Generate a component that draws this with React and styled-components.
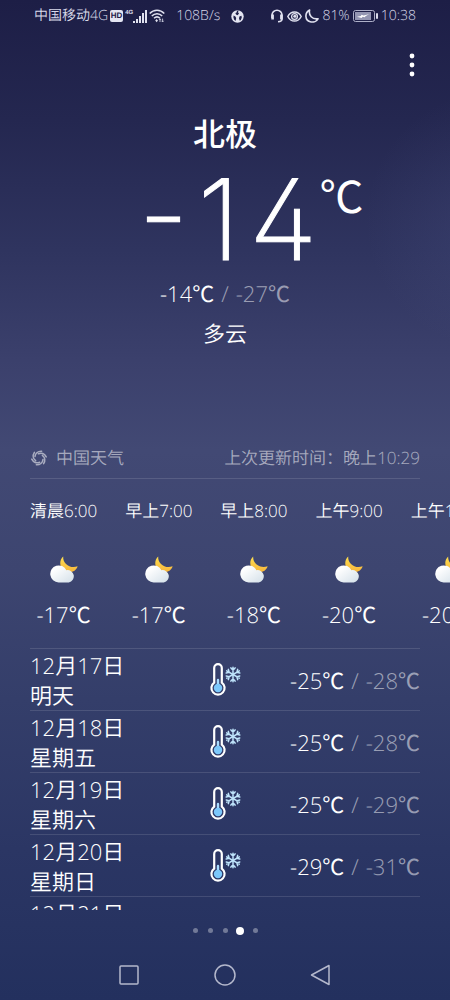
import React, { useState } from 'react';
import styled, { createGlobalStyle } from 'styled-components';

const GlobalStyle = createGlobalStyle`
  *,
  *::before,
  *::after {
    box-sizing: border-box;
  }

  body {
    margin: 0;
    background: #232f5f;
    text-rendering: geometricPrecision;
  }

  button {
    padding: 0;
    border: 0;
    background: none;
    color: inherit;
    font: inherit;
    cursor: pointer;
  }

  ul {
    margin: 0;
    padding: 0;
    list-style: none;
  }

  svg {
    display: block;
    flex: none;
  }
`;

const Screen = styled.div`
  display: flex;
  flex-direction: column;
  min-height: 100vh;
  overflow: hidden;
  color: #fff;
  font-family: 'Open Sans', 'Noto Sans CJK SC', sans-serif;
  font-size: 22px;
  font-weight: 300;
  line-height: 30px;
  background: radial-gradient(
      circle at 110% 22%,
      rgba(110, 120, 180, 0.14),
      transparent 130px
    ),
    linear-gradient(
      #1d1e46 0%,
      #242750 12%,
      #2f345f 25%,
      #3b406c 36%,
      #424974 45%,
      #3d4570 57%,
      #343e6a 70%,
      #2b3664 85%,
      #23305e 100%
    );
`;

const StatusBar = styled.header`
  display: flex;
  justify-content: space-between;
  height: 32px;
  padding: 0 34px;
  color: #d9daea;
  font-size: 14px;
  line-height: 32px;
`;

const StatusGroup = styled.div`
  display: flex;
  align-items: center;
  gap: ${(props) => props.$gap}px;
`;

const HdBadge = styled.span`
  width: 13px;
  height: 12px;
  border-radius: 2px;
  background: #e4e5f2;
  color: #1f2049;
  font-family: 'Liberation Sans', sans-serif;
  font-size: 8px;
  font-weight: 700;
  line-height: 12px;
  text-align: center;
`;

const Signal = styled.span`
  display: flex;
  align-items: flex-start;
`;

const SignalType = styled.span`
  font-family: 'Liberation Sans', sans-serif;
  font-size: 6px;
  font-weight: 700;
  line-height: 6px;
`;

const Toolbar = styled.div`
  display: flex;
  justify-content: flex-end;
  height: 66px;
  padding: 0 26px;
`;

const MenuButton = styled.button`
  display: flex;
  align-items: center;
  justify-content: center;
  width: 24px;
  height: 66px;
`;

const Current = styled.section`
  display: flex;
  flex-direction: column;
  align-items: center;
  height: 340px;
  padding-top: 13px;
`;

const City = styled.h1`
  margin: 0;
  font-size: 32px;
  font-weight: 500;
  line-height: 48px;
`;

const Temperature = styled.div`
  display: grid;
  grid-template-columns: 1fr auto 1fr;
  align-self: stretch;
  height: 120px;
  padding-left: 6px;
`;

const Degrees = styled.span`
  display: flex;
  grid-column: 2;
  gap: 9px;
  font-family: Inter, sans-serif;
  font-size: 112px;
  font-feature-settings: 'case', 'cv02', 'ss01';
  font-weight: 200;
  line-height: 122px;
  -webkit-text-stroke: 1px #fff;
`;

const Unit = styled.span`
  padding: 13px 0 0 2px;
  font-size: 44px;
  font-weight: 400;
  line-height: 48px;
`;

const Range = styled.div`
  display: flex;
  gap: 7px;
  white-space: nowrap;
`;

const Low = styled.span`
  color: rgba(255, 255, 255, 0.52);
`;

const Condition = styled.div`
  margin-top: 10px;
`;

const Han = styled.span`
  font-weight: ${(props) => (props.$unit ? 400 : 350)};
`;

const Source = styled.div`
  display: flex;
  align-items: center;
  justify-content: space-between;
  height: 41px;
  margin: 0 30px;
  border-bottom: 1px solid rgba(255, 255, 255, 0.12);
  color: rgba(255, 255, 255, 0.55);
  font-size: 17px;
`;

const SourceName = styled.a`
  display: flex;
  align-items: center;
  gap: 8px;
  color: inherit;
  text-decoration: none;
`;

const Hours = styled.ul`
  display: flex;
  gap: 28px;
  height: 169px;
  padding: 17px 0 0 30px;
  overflow: hidden;
`;

const Hour = styled.li`
  display: flex;
  flex: none;
  flex-direction: column;
  align-items: center;
`;

const HourLabel = styled.span`
  font-size: 17px;
`;

const HourIcon = styled.span`
  margin: 30px 0 17px;
`;

const Days = styled.ul`
  flex: 1 1 0;
  min-height: 0;
  margin: 0 30px;
  overflow: hidden;
`;

const Day = styled.li`
  display: grid;
  grid-template-columns: 1fr auto 1fr;
  align-items: center;
  height: 62px;
  padding-top: 2px;
  border-top: 1px solid rgba(255, 255, 255, 0.12);
`;

const DayRange = styled(Range)`
  justify-content: flex-end;
`;

const Pager = styled.div`
  display: flex;
  align-items: center;
  justify-content: center;
  height: 41px;
`;

const PageDot = styled.button`
  display: flex;
  align-items: center;
  justify-content: center;
  width: 15px;
  height: 24px;

  &::before {
    content: '';
    width: ${(props) => (props.$active ? 8 : 5)}px;
    height: ${(props) => (props.$active ? 8 : 5)}px;
    border-radius: 50%;
    background: ${(props) =>
      props.$active ? '#fff' : 'rgba(255, 255, 255, 0.35)'};
  }
`;

const NavBar = styled.nav`
  display: flex;
  justify-content: center;
  gap: 48px;
  height: 49px;
`;

const NavButton = styled.button`
  display: flex;
  align-items: center;
  justify-content: center;
  width: 48px;
  height: 48px;
`;

const hours = [
  { label: '清晨6:00', temp: '-17℃' },
  { label: '早上7:00', temp: '-17℃' },
  { label: '早上8:00', temp: '-18℃' },
  { label: '上午9:00', temp: '-20℃' },
  { label: '上午10:00', temp: '-20℃' },
];

const days = [
  { date: '12月17日', name: '明天', high: '-25℃', low: '-28℃' },
  { date: '12月18日', name: '星期五', high: '-25℃', low: '-28℃' },
  { date: '12月19日', name: '星期六', high: '-25℃', low: '-29℃' },
  { date: '12月20日', name: '星期日', high: '-29℃', low: '-31℃' },
  { date: '12月21日', name: '星期一', high: '-28℃', low: '-30℃' },
];

// digits stay light, Chinese characters and the unit get a heavier cut
const Mixed = ({ children }) => (
  <span>
    {children.split(/([^\x20-\x7e]+)/).map((part, i) =>
      i % 2 ? (
        <Han key={i} $unit={part === '℃'}>
          {part}
        </Han>
      ) : (
        part
      )
    )}
  </span>
);

const SignalIcon = () => (
  <svg width="14" height="13" viewBox="0 0 14 13" fill="#e0e1ef">
    <rect x="0" y="11" width="2" height="2" />
    <rect x="3" y="9" width="2" height="4" />
    <rect x="6" y="6" width="2" height="7" />
    <rect x="9" y="3" width="2" height="10" />
    <rect x="12" y="0" width="2" height="13" />
  </svg>
);

const WifiIcon = () => (
  <svg width="16" height="14" viewBox="0 0 16 14" fill="none" stroke="#e0e1ef">
    <path d="M0.7 4.6C4.7 0.2 11.3 0.2 15.3 4.6" strokeWidth="1.5" />
    <path d="M2.8 7C5.7 3.9 10.3 3.9 13.2 7" strokeWidth="1.5" />
    <path d="M5 9.3C6.8 7.6 9.2 7.6 11 9.3" strokeWidth="1.5" />
    <path d="M6.2 11.6 7.6 9.9 9 11.6 7.6 13.2Z" fill="#e0e1ef" stroke="none" />
    <path d="M11 13V10M10 11l1-1.3L12 11M13.6 9.6v3M12.6 11.8l1 1.2 1-1.2" strokeWidth="0.8" />
  </svg>
);

const GlobeIcon = () => (
  <svg width="13" height="13" viewBox="0 0 13 13">
    <circle cx="6.5" cy="6.5" r="6.2" fill="#e4e5f2" />
    <path
      d="M6 .8 7.6.6 7 2.2 8 3.4 6.6 5.2 5 4.6 4.4 3 5.6 2.4ZM2.6 5.4 4.4 6.4l.8 1.6-.6 3L3.2 9.8 2.4 7.6ZM8.4 6.4l2-.6.4 1.6-1 2.6-1 .8-.8-2.4Z"
      fill="#1f2049"
    />
  </svg>
);

const HeadsetIcon = () => (
  <svg width="14" height="14" viewBox="0 0 14 14" fill="none" stroke="#e0e1ef">
    <path d="M2 9V6.2a5 5 0 0 1 10 0V10q0 2.6-4 2.8" strokeWidth="1.6" />
    <path d="M2.6 5.6v4.8M11.4 5.6v4.8" strokeWidth="2.6" />
  </svg>
);

const EyeIcon = () => (
  <svg width="15" height="11" viewBox="0 0 15 11" fill="none" stroke="#e0e1ef">
    <path d="M.8 5.5C4-.6 11-.6 14.2 5.5 11 11.6 4 11.6.8 5.5Z" strokeWidth="1.5" />
    <circle cx="7.5" cy="5.5" r="2.9" strokeWidth="1.3" />
    <circle cx="7.8" cy="5.2" r="1.5" fill="#e0e1ef" stroke="none" />
  </svg>
);

const SleepIcon = () => (
  <svg width="14" height="14" viewBox="0 0 14 14" fill="none" stroke="#e0e1ef">
    <path
      d="M4.6 1C-.6 3.8-.2 11.2 5.2 12.7 8.6 13.6 11.8 12 13 9.8 7.2 10.6 3.4 6.6 4.6 1Z"
      strokeWidth="1.6"
      strokeLinejoin="round"
    />
  </svg>
);

const BatteryIcon = () => (
  <svg width="25" height="12" viewBox="0 0 25 12">
    <rect x="0.5" y="0.5" width="21" height="11" rx="2" fill="none" stroke="#aeb0c8" />
    <rect x="2" y="2" width="16" height="8" fill="#9496b2" />
    <rect x="23" y="3" width="2" height="6" rx="1" fill="#d9daea" />
    <path d="M4 6.8 8 6 8.4 4.8 10.6 5.4 16 4.2 12.4 6.2 12 7.2 9.6 6.8 8.6 8Z" fill="#fff" />
  </svg>
);

const MoreIcon = () => (
  <svg width="6" height="24" viewBox="0 0 6 24" fill="#fff">
    <circle cx="3" cy="3" r="2.4" />
    <circle cx="3" cy="12" r="2.4" />
    <circle cx="3" cy="21" r="2.4" />
  </svg>
);

const SwirlIcon = () => (
  <svg
    width="18"
    height="18"
    viewBox="0 0 18 18"
    fill="none"
    stroke="rgba(255, 255, 255, 0.55)"
    strokeWidth="1.6"
    strokeLinecap="round"
  >
    {[0, 60, 120, 180, 240, 300].map((angle) => (
      <path
        key={angle}
        d="M5 7.4C5.4 4.2 8 2 11.6 2.2"
        transform={`rotate(${angle} 9 9)`}
      />
    ))}
  </svg>
);

const CloudyNightIcon = () => (
  <svg width="28" height="27" viewBox="0 0 28 27">
    <defs>
      <linearGradient id="cloud" x1="0" y1="0" x2="1" y2="1">
        <stop offset="0.2" stopColor="#ffffff" />
        <stop offset="1" stopColor="#d3dfe8" />
      </linearGradient>
      <linearGradient id="moon" x1="0" y1="0" x2="0" y2="1">
        <stop offset="0" stopColor="#ffe04f" />
        <stop offset="1" stopColor="#f6b43c" />
      </linearGradient>
    </defs>
    <path
      d="M13.2.4C9 4 9.2 11.5 14.5 14.8 19.5 17.6 26 16 27.6 10.2 20.6 13 12.6 8 13.2.4Z"
      fill="url(#moon)"
    />
    <path
      d="M8.6 26.4a8.5 8.5 0 1 1 7.8-12.2 6.2 6.2 0 1 1 2.4 12.2Z"
      fill="url(#cloud)"
    />
  </svg>
);

const FreezingIcon = () => (
  <svg width="32" height="36" viewBox="0 0 32 36" fill="none">
    <path
      d="M5.2 19.6V5a3.8 3.8 0 0 1 7.6 0v14.6a6.6 6.6 0 1 1-7.6 0Z"
      stroke="#fff"
      strokeWidth="2.2"
    />
    <path d="M9 17v8" stroke="#a9dcff" strokeWidth="2.4" strokeLinecap="round" />
    <circle cx="9" cy="25" r="4.2" fill="#7cc8fb" />
    <g stroke="#bfe4fb" strokeWidth="1.5" strokeLinecap="round">
      {[0, 60, 120, 180, 240, 300].map((angle) => (
        <path
          key={angle}
          d="M24 11.5V4.2M21.9 4.9 24 7.1l2.1-2.2"
          transform={`rotate(${angle} 24 11.5)`}
        />
      ))}
    </g>
  </svg>
);

export default function App() {
  const [page, setPage] = useState(3);

  return (
    <>
      <GlobalStyle />
      <Screen>
        <StatusBar>
          <StatusGroup $gap={11}>
            <StatusGroup $gap={2}>
              <Mixed>中国移动4G</Mixed>
              <HdBadge>HD</HdBadge>
              <Signal>
                <SignalType>4G</SignalType>
                <SignalIcon />
              </Signal>
              <WifiIcon />
            </StatusGroup>
            <span>108B/s</span>
            <GlobeIcon />
          </StatusGroup>
          <StatusGroup $gap={3}>
            <HeadsetIcon />
            <EyeIcon />
            <SleepIcon />
            <span>81%</span>
            <BatteryIcon />
            <time>10:38</time>
          </StatusGroup>
        </StatusBar>

        <Toolbar>
          <MenuButton aria-label="更多">
            <MoreIcon />
          </MenuButton>
        </Toolbar>

        <Current>
          <City>北极</City>
          <Temperature>
            <Degrees>
              {[...'-14'].map((char) => (
                <span key={char}>{char}</span>
              ))}
            </Degrees>
            <Unit>℃</Unit>
          </Temperature>
          <Range>
            <Mixed>-14℃</Mixed>
            <Low>/</Low>
            <Low>
              <Mixed>-27℃</Mixed>
            </Low>
          </Range>
          <Condition>
            <Mixed>多云</Mixed>
          </Condition>
        </Current>

        <Source>
          <SourceName href="#source">
            <SwirlIcon />
            <Mixed>中国天气</Mixed>
          </SourceName>
          <Mixed>上次更新时间：晚上10:29</Mixed>
        </Source>

        <Hours>
          {hours.map((hour) => (
            <Hour key={hour.label}>
              <HourLabel>
                <Mixed>{hour.label}</Mixed>
              </HourLabel>
              <HourIcon>
                <CloudyNightIcon />
              </HourIcon>
              <Mixed>{hour.temp}</Mixed>
            </Hour>
          ))}
        </Hours>

        <Days>
          {days.map((day) => (
            <Day key={day.date}>
              <div>
                <div>
                  <Mixed>{day.date}</Mixed>
                </div>
                <div>
                  <Mixed>{day.name}</Mixed>
                </div>
              </div>
              <FreezingIcon />
              <DayRange>
                <Mixed>{day.high}</Mixed>
                <Low>/</Low>
                <Low>
                  <Mixed>{day.low}</Mixed>
                </Low>
              </DayRange>
            </Day>
          ))}
        </Days>

        <Pager>
          {[0, 1, 2, 3, 4].map((index) => (
            <PageDot
              key={index}
              aria-label={`城市 ${index + 1}`}
              $active={index === page}
              onClick={() => setPage(index)}
            />
          ))}
        </Pager>

        <NavBar>
          <NavButton aria-label="最近任务">
            <svg width="20" height="20" fill="none" stroke="#b4b8cc" strokeWidth="1.5">
              <rect x="1" y="1" width="18" height="18" rx="1" />
            </svg>
          </NavButton>
          <NavButton aria-label="主屏幕">
            <svg width="22" height="22" fill="none" stroke="#b4b8cc" strokeWidth="1.5">
              <circle cx="11" cy="11" r="10" />
            </svg>
          </NavButton>
          <NavButton aria-label="返回">
            <svg width="22" height="22" fill="none" stroke="#b4b8cc" strokeWidth="1.5">
              <path d="M19 1.5v19L1.5 11Z" strokeLinejoin="round" />
            </svg>
          </NavButton>
        </NavBar>
      </Screen>
    </>
  );
}
